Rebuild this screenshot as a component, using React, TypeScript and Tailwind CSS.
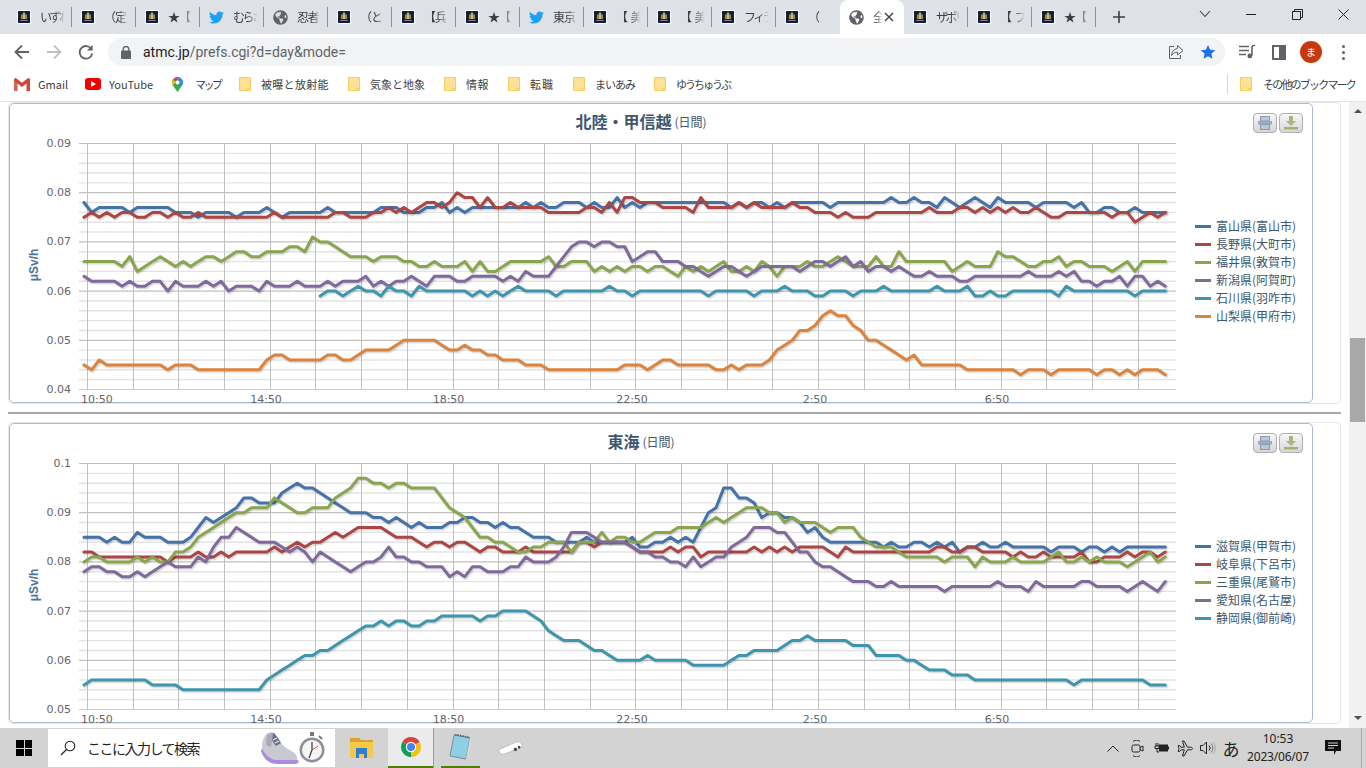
import React from "react";
import { FaTwitter, FaGlobeAmericas } from "react-icons/fa";

const COLORS = ["#4572A7", "#AA4643", "#89A54E", "#80699B", "#3D96AE", "#DB843D"];
const N = null;

const HOKURIKU: (number | null)[][] = [
  [78,76,77,77,77,77,76,77,77,77, 77,77,76,76,76,75,76,76,76,76, 75,76,76,76,77,76,75,76,76,76, 76,76,77,76,76,76,76,76,76,77, 77,77,76,76,76,77,77,78,76,77, 76,77,77,77,77,77,77,77,78,77, 78,77,77,78,78,78,77,78,77,77, 79,77,78,77,78,78,78,78,78,78, 78,78,78,78,78,77,78,77,78,78, 77,78,77,78,78,78,78,78,77,78, 78,78,78,78,78,78,79,78,78,79, 78,78,77,79,78,77,78,79,78,77, 79,78,78,78,78,77,78,78,78,78, 77,78,76,76,77,77,76,76,77,76, 76,76,76],
  [75,76,75,76,75,76,76,75,75,76, 76,75,76,75,75,76,75,75,75,75, 75,75,75,75,75,76,75,75,75,75, 75,75,75,76,76,75,75,75,76,76, 77,76,77,76,77,78,78,77,78,80, 79,79,77,79,77,77,78,77,77,77, 77,76,76,76,76,76,77,77,76,78, 76,79,79,78,78,78,77,77,77,77, 76,79,77,77,77,77,78,77,78,77, 77,77,77,78,77,77,76,76,76,75, 76,75,75,75,76,76,76,76,76,76, 76,77,76,76,76,77,77,76,77,76, 77,76,77,76,76,77,76,75,75,76, 76,76,76,76,76,75,76,76,74,75, 76,75,76],
  [66,66,66,66,66,65,67,64,65,66, 67,66,65,66,65,66,67,67,66,67, 68,68,67,67,68,68,68,69,69,68, 71,70,70,69,68,67,67,67,66,67, 67,67,66,66,65,65,66,65,65,65, 66,64,66,64,64,65,66,66,66,66, 66,67,65,65,66,66,66,64,65,64, 65,64,65,65,64,65,65,64,63,65, 64,65,64,65,66,64,64,65,64,66, 65,63,65,65,65,66,65,65,66,67, 66,65,65,65,67,65,65,68,66,66, 66,66,66,66,64,65,66,65,65,65, 68,67,67,66,65,65,66,66,67,65, 66,66,65,65,65,64,65,66,64,66, 66,66,66],
  [63,62,62,62,62,61,62,61,61,62, 62,60,62,61,61,61,62,61,62,60, 61,61,61,60,62,61,61,61,62,61, 61,61,62,61,62,62,62,63,61,62, 61,62,62,63,62,61,63,63,63,62, 62,63,63,63,63,62,63,62,64,63, 63,63,65,67,69,70,70,69,70,70, 69,69,66,67,68,68,66,66,66,65, 65,64,63,64,65,65,64,63,64,65, 65,65,65,65,64,65,66,66,65,66, 67,65,66,64,65,65,64,65,64,63, 63,64,63,63,63,62,62,63,63,63, 63,63,63,63,64,63,63,63,64,63, 64,62,62,61,62,62,63,61,63,63, 61,62,61],
  [N,N,N,N,N,N,N,N,N,N, N,N,N,N,N,N,N,N,N,N, N,N,N,N,N,N,N,N,N,N, N,59,60,60,59,60,61,60,60,59, 61,60,60,59,61,60,60,60,60,60, 60,59,60,59,60,59,60,61,60,60, 60,60,59,60,60,60,60,60,60,61, 60,60,59,60,60,60,60,60,60,60, 60,60,59,60,60,60,60,60,59,60, 60,60,61,60,60,60,59,59,60,60, 60,59,60,60,60,61,60,60,60,60, 60,60,61,60,60,60,61,59,59,60, 59,59,60,60,60,60,60,60,59,61, 60,60,60,60,60,60,60,60,59,60, 60,60,60],
  [45,44,46,45,45,45,45,45,45,45, 45,44,45,45,45,44,44,44,44,44, 44,44,44,44,46,47,47,46,46,46, 46,46,47,47,46,46,47,48,48,48, 48,49,50,50,50,50,50,49,48,48, 49,48,48,47,47,46,46,46,45,45, 45,44,44,44,44,44,44,44,44,44, 44,45,45,45,44,45,46,46,45,45, 45,45,45,44,44,45,44,45,45,45, 46,48,49,50,52,52,53,55,56,55, 55,53,52,50,50,49,48,47,46,47, 45,45,45,45,45,45,44,44,44,44, 44,44,44,43,44,44,44,43,44,44, 44,44,44,43,44,44,43,44,43,44, 44,44,43],
];

const TOKAI: (number | null)[][] = [
  [85,85,85,84,85,84,84,86,85,85, 85,84,84,84,85,87,89,88,89,90, 91,93,93,92,92,92,94,95,96,95, 95,94,93,92,91,90,90,90,89,89, 88,89,88,87,88,87,87,87,88,88, 89,89,88,88,87,88,87,87,86,85, 85,85,84,84,84,84,85,84,84,84, 84,84,85,83,83,84,84,85,84,85, 84,87,90,91,95,95,93,93,92,89, 90,90,89,89,88,86,87,85,84,84, 84,84,84,84,84,83,84,83,83,84, 84,83,84,83,84,82,83,83,84,83, 83,84,83,83,83,83,83,82,83,83, 83,82,83,83,82,83,82,83,83,83, 83,83,83],
  [82,82,81,81,81,81,81,81,81,81, 81,80,81,81,81,82,81,81,82,81, 82,82,82,82,82,83,82,83,84,83, 84,84,85,86,85,86,87,87,87,87, 86,85,85,85,84,83,84,84,83,84, 84,83,82,83,83,82,82,82,83,82, 82,82,82,82,82,84,84,83,84,84, 84,84,83,82,82,82,82,83,82,83, 83,81,82,82,82,82,82,82,83,82, 83,82,83,82,83,83,83,83,82,81, 83,82,82,82,82,82,82,82,82,82, 82,82,83,83,82,82,83,83,82,82, 82,82,81,82,81,81,82,81,81,81, 81,82,80,80,81,81,81,82,81,82, 82,81,82],
  [80,81,81,80,80,80,80,81,80,81, 80,80,82,82,83,85,86,87,88,89, 90,90,91,91,91,93,92,91,90,90, 91,91,91,93,94,95,97,97,96,96, 95,96,96,95,95,95,95,93,91,90, 89,87,85,85,84,84,83,82,82,83, 83,84,84,84,82,84,84,84,86,84, 85,85,84,84,85,86,86,86,87,87, 87,87,88,89,88,89,90,91,91,91, 90,90,88,89,88,88,88,87,86,87, 87,87,85,84,83,83,83,82,81,81, 81,81,81,80,81,81,81,79,81,80, 80,80,81,80,80,80,80,81,82,80, 80,81,80,81,80,80,80,79,80,81, 82,80,81],
  [78,79,79,78,78,77,77,78,77,78, 79,80,79,79,79,81,80,83,85,85, 87,86,85,84,84,84,83,82,83,82, 80,82,81,80,79,78,79,80,80,81, 83,81,81,80,80,79,79,79,77,78, 77,79,79,78,78,78,79,79,81,80, 80,80,81,83,86,86,86,85,84,84, 84,84,83,82,82,81,81,80,80,79, 81,79,80,81,81,83,84,85,87,87, 87,86,86,84,82,82,80,79,79,78, 77,76,76,76,75,75,76,75,75,75, 75,75,75,74,75,75,75,75,75,75, 76,75,75,75,74,76,75,75,75,75, 75,76,76,75,75,75,75,74,75,76, 75,74,76],
  [55,56,56,56,56,56,56,56,56,55, 55,55,55,54,54,54,54,54,54,54, 54,54,54,54,56,57,58,59,60,61, 61,62,62,63,64,65,66,67,67,68, 67,68,68,67,67,68,68,69,69,69, 69,69,68,69,69,70,70,70,70,69, 68,66,65,64,64,64,63,62,62,61, 60,60,60,60,61,60,60,60,60,60, 59,59,59,59,59,60,61,61,62,62, 62,62,63,64,64,65,64,64,64,64, 64,63,63,63,61,61,61,61,60,60, 59,58,58,58,57,57,57,56,56,56, 56,56,56,56,56,56,56,56,56,56, 55,56,56,56,56,56,56,56,56,56, 55,55,55],
];

const PLOT_TOP = 10.5;
const PLOT_BOTTOM = 256.5;
const PER_UNIT = 246 / 50;
const VLINES = Array.from({ length: 24 }, (_, i) => Math.round(77 + i * 45.69) + 0.5);
const XLABELS: [string, number, "start" | "middle"][] = [
  ["10:50", 71, "start"],
  ["14:50", 256, "middle"],
  ["18:50", 438.5, "middle"],
  ["22:50", 622, "middle"],
  ["2:50", 805, "middle"],
  ["6:50", 987, "middle"],
];

function Plot({ data, min }: { data: (number | null)[][]; min: number }) {
  const yOf = (v: number) => PLOT_BOTTOM - (v - min) * PER_UNIT;
  const paths = data.map((s) =>
    s
      .map((v, i) => (v === null ? "" : `${(74 + 7.615 * i).toFixed(1)},${yOf(v).toFixed(1)}`))
      .filter(Boolean)
      .join(" ")
  );
  const minors = Array.from({ length: 26 }, (_, i) => i);
  const top = min + 50;
  return (
    <svg width="1170" height="270" viewBox="0 0 1170 270" className="shrink-0 overflow-visible [font-family:'DejaVu_Sans',sans-serif]">
      {minors.map((i) => (
        <line
          key={i}
          x1="69"
          x2="1166"
          y1={PLOT_TOP + i * 9.84}
          y2={PLOT_TOP + i * 9.84}
          stroke={i === 25 ? "#C0D0E0" : i % 5 === 0 ? "#c0c0c0" : "#e3e3e3"}
          strokeWidth={i % 5 === 0 ? 1.2 : 1.4}
        />
      ))}
      {VLINES.map((x) => (
        <line key={x} x1={x} x2={x} y1={PLOT_TOP} y2={PLOT_BOTTOM} stroke="#c0c0c0" strokeWidth="1" />
      ))}
      {[0, 1, 2, 3, 4, 5].map((i) => (
        <text key={i} x="61" y={PLOT_TOP + i * 49.2 + 3.5} textAnchor="end" className="fill-[#666666] text-[11px]">
          {((top - i * 10) / 1000).toString()}
        </text>
      ))}
      {XLABELS.map(([t, x, a]) => (
        <text key={t} x={x} y="269.5" textAnchor={a} className="fill-[#666666] text-[11px]">
          {t}
        </text>
      ))}
      <text
        x="24"
        y="132"
        textAnchor="middle"
        dominantBaseline="central"
        transform="rotate(-90 24 132)"
        className="fill-[#4D759E] text-[12px] font-bold [font-family:'Liberation_Sans',sans-serif]"
      >
        μSv/h
      </text>
      {paths.map((p, i) => (
        <g key={i} fill="none" strokeLinejoin="round" strokeLinecap="round">
          <polyline points={p} stroke="#000" strokeOpacity="0.05" strokeWidth="5.5" transform="translate(1 1)" />
          <polyline points={p} stroke="#000" strokeOpacity="0.1" strokeWidth="3.5" transform="translate(1 1)" />
          <polyline points={p} stroke={COLORS[i]} strokeWidth="3" />
        </g>
      ))}
    </svg>
  );
}

function PrintIcon() {
  return (
    <svg width="16" height="14" viewBox="0 0 16 14">
      <rect x="3.5" y="0.5" width="9" height="4.5" fill="#b4c8e2" stroke="#8b9aae" />
      <rect x="1" y="5" width="14" height="3.5" fill="#9fa9b6" />
      <rect x="3.5" y="8.5" width="9" height="5" fill="#b4c8e2" stroke="#8b9aae" />
    </svg>
  );
}

function DownloadIcon() {
  return (
    <svg width="16" height="14" viewBox="0 0 16 14">
      <path d="M6 0h4v5h3l-5 5-5-5h3z" fill="#a8b878" />
      <rect x="1" y="11" width="14" height="2.5" fill="#a4b26d" />
    </svg>
  );
}

function Chart({ title, names, data, min }: { title: string; names: string[]; data: (number | null)[][]; min: number }) {
  return (
    <div className="h-[302px] w-[1333px] shrink-0 rounded-[4px] border border-[#e6e6e6] bg-white">
      <div className="relative flex h-[300px] w-[1304px] flex-col rounded-[5px] border border-[#a7bbd5] bg-white">
        <div className="flex h-[29px] shrink-0 items-center justify-center pr-[40px] pt-[5px] text-[#3E576F]">
          <span className="text-[16px] font-bold leading-none">{title}</span>
          <span className="ml-[3px] mt-[2px] text-[12px] leading-none">(日間)</span>
        </div>
        <div className="absolute right-[9px] top-[9px] flex gap-[2px]">
          <div className="flex h-[20px] w-[24px] items-center justify-center rounded-[4px] border border-[#b0b0b0] bg-gradient-to-b from-[#f8f8f8] to-[#d6d6d6]">
            <PrintIcon />
          </div>
          <div className="flex h-[20px] w-[24px] items-center justify-center rounded-[4px] border border-[#b0b0b0] bg-gradient-to-b from-[#f8f8f8] to-[#d6d6d6]">
            <DownloadIcon />
          </div>
        </div>
        <div className="flex">
          <Plot data={data} min={min} />
          <div className="ml-[15px] pt-[84px]">
            {names.map((n, i) => (
              <div key={n} className="flex h-[18px] items-center">
                <div className="h-[3px] w-[16px]" style={{ background: COLORS[i] }} />
                <span className="ml-[5px] whitespace-nowrap text-[12px] leading-none text-[#3E576F]">{n}</span>
              </div>
            ))}
          </div>
        </div>
      </div>
    </div>
  );
}

function Favicon() {
  return (
    <svg width="14" height="14" viewBox="0 0 14 14" className="shrink-0">
      <rect width="14" height="14" fill="#fff" />
      <rect x="1" y="1" width="12" height="12" fill="#181d3e" />
      <rect x="6" y="2.5" width="2" height="6.5" fill="#b9995a" />
      <rect x="4" y="4.5" width="6" height="4.5" fill="#9c8757" />
      <rect x="6" y="3" width="2" height="6" fill="#d4b468" />
      <rect x="3.5" y="10" width="7" height="1" fill="#7f8194" />
    </svg>
  );
}

const TABS: [string, string, string][] = [
  ["fav", "いずれ", "tracking-[-2.5px]"],
  ["fav", "（定", "tracking-[-1px]"],
  ["fav", "★【", "tracking-[-1px]"],
  ["tw", "むらさ", "tracking-[-2.5px]"],
  ["globe", "忍者", "tracking-[-1.5px]"],
  ["fav", "（と", "tracking-[-1px]"],
  ["fav", "【兵", "tracking-[-1px]"],
  ["fav", "★【", "tracking-[-1px]"],
  ["tw", "東京", "tracking-[-1px]"],
  ["fav", "【 美", "tracking-[0px]"],
  ["fav", "【 美", "tracking-[0px]"],
  ["fav", "フィラ", "tracking-[-2.5px]"],
  ["fav", "（", "tracking-[0px]"],
  ["active", "全", "tracking-[0px]"],
  ["fav", "ザポリ", "tracking-[-2.5px]"],
  ["fav", "【 プ", "tracking-[0px]"],
  ["fav", "★【", "tracking-[-1px]"],
];

function TabIcon({ kind }: { kind: string }) {
  if (kind === "tw") return <FaTwitter className="h-[15px] w-[15px] shrink-0 text-[#1da1f2]" />;
  if (kind === "globe" || kind === "active") return <FaGlobeAmericas className="h-[15px] w-[15px] shrink-0 text-[#5f6368]" />;
  return <Favicon />;
}

function TabStrip() {
  return (
    <div className="flex h-[34px] shrink-0 bg-[#dee1e6] pl-[8px]">
      {TABS.map(([k, t, tr], i) => {
        const active = k === "active";
        const noSep = active || TABS[i + 1]?.[0] === "active";
        return (
          <div key={i} className={`flex h-[34px] w-[64px] shrink-0 items-center pl-[9px] ${active ? "rounded-t-[8px] bg-white" : ""}`}>
            <TabIcon kind={k} />
            {active ? (
              <>
                <span className="ml-[9px] w-[10px] overflow-hidden whitespace-nowrap text-[12px] text-[#3c4043] [mask-image:linear-gradient(to_right,black_30%,transparent)]">{t}</span>
                <svg width="10" height="10" viewBox="0 0 10 10" className="ml-[1px]">
                  <path d="M1 1l8 8M9 1l-8 8" stroke="#3c4043" strokeWidth="1.4" />
                </svg>
              </>
            ) : (
              <span className={`ml-[9px] w-[25px] overflow-hidden whitespace-nowrap text-[12px] text-[#3c4043] [mask-image:linear-gradient(to_right,black_60%,transparent)] ${tr}`}>{t}</span>
            )}
            {!noSep && <div className="ml-auto h-[20px] w-px shrink-0 bg-[#8f9296]" />}
          </div>
        );
      })}
      <div className="ml-[9px] flex h-[34px] w-[28px] items-center justify-center">
        <svg width="14" height="14" viewBox="0 0 14 14">
          <path d="M7 1v12M1 7h12" stroke="#3c4043" strokeWidth="1.6" />
        </svg>
      </div>
      <div className="ml-auto flex pb-[6px]">
        <div className="mr-[12px] flex h-[28px] w-[22px] items-center justify-center">
          <svg width="12" height="8" viewBox="0 0 12 8">
            <path d="M1 1l5 5.5L11 1" fill="none" stroke="#3c4043" strokeWidth="1.1" />
          </svg>
        </div>
        <div className="flex h-[28px] w-[46px] items-center justify-center">
          <div className="h-px w-[10px] bg-[#222]" />
        </div>
        <div className="flex h-[28px] w-[46px] items-center justify-center">
          <svg width="11" height="11" viewBox="0 0 11 11">
            <path d="M.5 2.5h8v8h-8zM2.5 2.5v-2h8v8h-2" fill="none" stroke="#222" />
          </svg>
        </div>
        <div className="flex h-[28px] w-[46px] items-center justify-center">
          <svg width="11" height="11" viewBox="0 0 11 11">
            <path d="M.5.5l10 10M10.5.5l-10 10" stroke="#222" />
          </svg>
        </div>
      </div>
    </div>
  );
}

function Toolbar() {
  return (
    <div className="flex h-[36px] shrink-0 items-center bg-white pl-[6px]">
      <div className="flex h-[32px] w-[32px] items-center justify-center">
        <svg width="16" height="16" viewBox="0 0 16 16">
          <path d="M15 8H2M8 1.5L1.5 8 8 14.5" fill="none" stroke="#5f6368" strokeWidth="1.8" />
        </svg>
      </div>
      <div className="flex h-[32px] w-[32px] items-center justify-center">
        <svg width="16" height="16" viewBox="0 0 16 16">
          <path d="M1 8h13M8 1.5L14.5 8 8 14.5" fill="none" stroke="#bdc1c6" strokeWidth="1.8" />
        </svg>
      </div>
      <div className="flex h-[32px] w-[32px] items-center justify-center">
        <svg width="16" height="16" viewBox="0 0 16 16">
          <path d="M13.5 5.2A6.3 6.3 0 1 0 14.2 9.5" fill="none" stroke="#5f6368" strokeWidth="1.8" />
          <path d="M14.6 1v5.6H9z" fill="#5f6368" />
        </svg>
      </div>
      <div className="ml-[6px] flex h-[28px] w-[1117px] items-center rounded-full bg-[#f1f3f4] pl-[13px]">
        <svg width="10" height="13" viewBox="0 0 10 13" className="shrink-0">
          <path d="M2.2 5V3.4a2.8 2.8 0 0 1 5.6 0V5" fill="none" stroke="#5f6368" strokeWidth="1.3" />
          <rect y="4.6" width="10" height="8.4" rx="1.2" fill="#5f6368" />
        </svg>
        <span className="ml-[12px] whitespace-nowrap text-[14px] leading-none [font-family:'Roboto',sans-serif]">
          <span className="text-[#202124]">atmc.jp</span>
          <span className="text-[#5f6368]">/prefs.cgi?d=day&amp;mode=</span>
        </span>
        <svg width="16" height="16" viewBox="0 0 16 16" className="ml-auto">
          <path d="M9.5 1.5L15 6.5l-5.5 4.5V8.3C6 8.3 4.6 9.6 3.6 11.5 3.8 7.6 6 4.9 9.5 4.6z" fill="none" stroke="#5f6368" />
          <path d="M6 2.5H1.5v12h11V11" fill="none" stroke="#5f6368" />
        </svg>
        <svg width="16" height="16" viewBox="0 0 24 24" className="ml-[16px] mr-[9px]">
          <path d="M12 1.5l3.2 7.1 7.7.8-5.8 5.1 1.7 7.6L12 18.2l-6.8 3.9 1.7-7.6L1.1 9.4l7.7-.8z" fill="#1a73e8" />
        </svg>
      </div>
      <div className="ml-[6px] flex h-[32px] w-[32px] items-center justify-center">
        <svg width="16" height="14" viewBox="0 0 16 14">
          <path d="M0 1.5h10M0 5.5h10M0 9.5h7" stroke="#5f6368" strokeWidth="1.6" />
          <path d="M13 1v9.5" stroke="#5f6368" strokeWidth="1.6" />
          <path d="M13 0.5h3" stroke="#5f6368" strokeWidth="1.6" />
          <circle cx="10.8" cy="11" r="2.4" fill="#5f6368" />
        </svg>
      </div>
      <div className="flex h-[32px] w-[32px] items-center justify-center">
        <div className="flex h-[15px] w-[14px] justify-end border-2 border-[#5f6368]">
          <div className="h-full w-[5px] bg-[#5f6368]" />
        </div>
      </div>
      <div className="flex h-[32px] w-[32px] items-center justify-center">
        <div className="flex h-[22px] w-[22px] items-center justify-center rounded-full bg-[#c5390c] text-[10px] leading-none text-white">ま</div>
      </div>
      <div className="flex h-[32px] w-[32px] flex-col items-center justify-center gap-[3px]">
        <div className="h-[3px] w-[3px] rounded-full bg-[#5f6368]" />
        <div className="h-[3px] w-[3px] rounded-full bg-[#5f6368]" />
        <div className="h-[3px] w-[3px] rounded-full bg-[#5f6368]" />
      </div>
    </div>
  );
}

function Folder() {
  return (
    <svg width="12" height="14" viewBox="0 0 12 14" className="shrink-0">
      <path d="M.5.5h11v13H.5z" fill="#fde293" stroke="#f6ce60" />
      <path d="M8.5 13.5v-2h3" fill="none" stroke="#f6ce60" />
    </svg>
  );
}

const FOLDERS: [string, number, string][] = [
  ["被曝と放射能", 68, "tracking-[0.3px]"],
  ["気象と地象", 55, "tracking-[0px]"],
  ["情報", 23, "tracking-[0.5px]"],
  ["転職", 24, "tracking-[1px]"],
  ["まいあみ", 40, "tracking-[-1px]"],
  ["ゆうちゅうぶ", 54, "tracking-[-2px]"],
];

function Bookmarks() {
  return (
    <div className="flex h-[32px] shrink-0 items-center border-b border-[#e3e3e3] bg-white pb-[3px] pl-[14px] text-[11px] leading-none text-[#3c4043]">
      <svg width="16" height="13" viewBox="0 0 16 13" className="shrink-0">
        <path d="M0 1.5V13h3.5V5.5L8 9l4.5-3.5V13H16V1.5a1.5 1.5 0 0 0-2.5-1L8 4.7 2.5.5A1.5 1.5 0 0 0 0 1.5z" fill="#d44638" />
        <path d="M0 1.5V13h3.5V5L0 2.2z" fill="#c5c5c5" opacity="0.25" />
      </svg>
      <span className="ml-[8px] w-[30px] whitespace-nowrap">Gmail</span>
      <div className="ml-[17px] flex h-[12px] w-[16px] shrink-0 items-center justify-center rounded-[3px] bg-[#f40000]">
        <div className="ml-[1px] h-0 w-0 border-y-[3px] border-l-[5px] border-y-transparent border-l-white" />
      </div>
      <span className="ml-[8px] w-[44px] whitespace-nowrap">YouTube</span>
      <svg width="11" height="15" viewBox="0 0 11 15" className="ml-[19px] shrink-0">
        <path d="M5.5 0A5.5 5.5 0 0 0 .9 8.4L5.5 15l4.6-6.6A5.5 5.5 0 0 0 5.5 0z" fill="#34a853" />
        <path d="M5.5 0A5.5 5.5 0 0 1 10.1 8.4L7.5 5.5A2.2 2.2 0 0 0 5.5 3.3z" fill="#4285f4" />
        <path d="M1 2.8A5.5 5.5 0 0 1 5.5 0v3.3a2.2 2.2 0 0 0-1.8 1z" fill="#ea4335" />
        <path d="M.9 8.4A5.5 5.5 0 0 1 1 2.8l2.7 2.2z" fill="#fbbc04" />
        <circle cx="5.5" cy="5.5" r="2" fill="#fff" />
      </svg>
      <span className="ml-[12px] w-[25px] whitespace-nowrap tracking-[-2.6px]">マップ</span>
      <div className="ml-[19px] flex">
        {FOLDERS.map(([t, w, tr], i) => (
          <div key={t} className={`flex items-center ${i ? "ml-[19px]" : ""}`}>
            <Folder />
            <span className={`ml-[10px] whitespace-nowrap ${tr}`} style={{ width: w }}>
              {t}
            </span>
          </div>
        ))}
      </div>
      <div className="ml-auto flex items-center pr-[11px]">
        <div className="mr-[12px] h-[20px] w-px bg-[#d5d5d5]" />
        <Folder />
        <span className="ml-[11px] w-[92px] whitespace-nowrap tracking-[-1.8px]">その他のブックマーク</span>
      </div>
    </div>
  );
}

function Scrollbar() {
  return (
    <div className="flex h-full w-[17px] flex-col items-center bg-[#f1f1f1]">
      <div className="mt-[7px] h-0 w-0 border-x-[4px] border-b-[4px] border-x-transparent border-b-[#505050]" />
      <div className="mt-[225px] h-[84px] w-[15px] bg-[#a8a8a8]" />
      <div className="mt-auto mb-[8px] h-0 w-0 border-x-[4px] border-t-[4px] border-x-transparent border-t-[#505050]" />
    </div>
  );
}

function WinLogo() {
  return (
    <div className="grid h-[16px] w-[16px] shrink-0 grid-cols-2 gap-[1px]">
      <div className="bg-black" />
      <div className="bg-black" />
      <div className="bg-black" />
      <div className="bg-black" />
    </div>
  );
}

function Shoe() {
  return (
    <svg width="38" height="34" viewBox="0 0 38 34" className="shrink-0">
      <path d="M1 16C1 10 3 5 6 3c2-2 5-2 7-1l3 4 5 7c3 4 8 6 11 8 3 2 5 5 4 8H14C7 27 2 22 1 16z" fill="#c9c9d2" />
      <path d="M13 2l4 5 3 5-5 3c-3-3-5-8-6-12z" fill="#6f7088" />
      <path d="M16 7l-4 2M18 10l-4 2" stroke="#e8e8f0" strokeWidth="1.2" />
      <path d="M6 3L5 14l5 2 2-13z" fill="#a9a9b8" />
      <path d="M1 17c3 7 8 11 14 12h21c1.500 0 2 1 1.500 2-.5 1.500-2 2-4 2H16C8 33 2 27 0 20z" fill="#a98be0" />
    </svg>
  );
}

function Stopwatch() {
  return (
    <svg width="26" height="32" viewBox="0 0 26 32" className="shrink-0">
      <rect x="11" y="0" width="4" height="4" fill="#777" />
      <path d="M20 4l3 3" stroke="#777" strokeWidth="2" />
      <circle cx="13" cy="18" r="12.5" fill="#8f8f9c" />
      <circle cx="13" cy="18" r="10" fill="#f5f5f5" />
      <path d="M13 18V10M13 18l-3 8" stroke="#444" strokeWidth="1.3" />
      <path d="M13 18l6-4" stroke="#c33" strokeWidth="0.8" />
    </svg>
  );
}

function ChromeLogo() {
  return (
    <svg width="24" height="24" viewBox="0 0 24 24">
      <path d="M12 12L3.34 7A10 10 0 0 1 20.66 7z" fill="#db4437" />
      <path d="M12 12L20.66 7A10 10 0 0 1 12 22z" fill="#f4c20d" />
      <path d="M12 12L12 22A10 10 0 0 1 3.34 7z" fill="#0f9d58" />
      <circle cx="12" cy="12" r="5.2" fill="#fff" />
      <circle cx="12" cy="12" r="4" fill="#4285f4" />
    </svg>
  );
}

function Taskbar() {
  return (
    <div className="flex h-[40px] shrink-0 items-center bg-[#d3d3d3] pl-[16px] text-[#222]">
      <WinLogo />
      <div className="ml-[16px] flex h-[38px] w-[287px] shrink-0 items-center bg-white pl-[12px]">
        <svg width="16" height="16" viewBox="0 0 16 16" className="shrink-0">
          <circle cx="10" cy="6" r="4.8" fill="none" stroke="#222" strokeWidth="1.1" />
          <path d="M6.5 9.5L1 15" stroke="#222" strokeWidth="1.2" />
        </svg>
        <span className="ml-[11px] w-[112px] whitespace-nowrap text-[14px] leading-none tracking-[-1.5px]">ここに入力して検索</span>
        <div className="ml-[62px] flex items-center">
          <Shoe />
          <Stopwatch />
        </div>
      </div>
      <div className="flex h-[40px] w-[53px] shrink-0 items-center justify-center">
        <svg width="23" height="20" viewBox="0 0 23 20">
          <path d="M0 0h9l2 2h12v4H0z" fill="#e0a030" />
          <rect y="4" width="23" height="16" fill="#f8c948" />
          <path d="M6 10h11v10h-3v-4H9v4H6z" fill="#2b7fd4" />
        </svg>
      </div>
      <div className="flex h-[40px] w-[46px] shrink-0 flex-col items-center border-r border-[#9a9a9a] bg-[#ebebeb]">
        <div className="flex flex-1 items-center">
          <ChromeLogo />
        </div>
        <div className="h-[2px] w-full bg-[#4f7f00]" />
      </div>
      <div className="ml-[7px] flex h-[40px] w-[39px] shrink-0 flex-col items-center">
        <div className="flex flex-1 items-center">
          <svg width="24" height="26" viewBox="0 0 24 26">
            <path d="M5 1l16 3-4 21-16-3z" fill="#8dd0e6" stroke="#7a8a92" />
            <path d="M6 0.5l15 3" stroke="#555" strokeWidth="1.5" strokeDasharray="1.5 1" />
            <path d="M17 25l4-21 2 1-4 20z" fill="#d8d8d8" />
          </svg>
        </div>
        <div className="h-[2px] w-full bg-[#4f7f00]" />
      </div>
      <div className="ml-[18px] flex h-[40px] items-center">
        <svg width="25" height="14" viewBox="0 0 25 14">
          <path d="M2 8L18 1c3-1 7 1 6 4-1 1-3 2-5 3L7 13C2 14-1 10 2 8z" fill="#fff" stroke="#a8a8a8" strokeWidth="0.7" />
          <rect x="16" y="7" width="2.500" height="3" fill="#333" transform="rotate(-20 17 8)" />
          <rect x="20" y="5" width="2" height="2.500" fill="#333" transform="rotate(-20 21 6)" />
        </svg>
      </div>
      <div className="ml-auto flex h-[40px] items-center pr-[4px]">
        <div className="flex w-[24px] justify-center">
          <svg width="12" height="7" viewBox="0 0 12 7">
            <path d="M.5 6.5L6 1l5.500 5.500" fill="none" stroke="#222" />
          </svg>
        </div>
        <div className="flex w-[24px] justify-center">
          <svg width="13" height="17" viewBox="0 0 13 17" fill="none" stroke="#222">
            <path d="M2 1.5a5 5 0 0 1 7 0M2 15.5a5 5 0 0 0 7 0" />
            <rect x="1" y="5" width="8" height="7" rx="1.5" />
            <path d="M9 7.5l3-1.5v5l-3-1.5" />
          </svg>
        </div>
        <div className="flex w-[24px] justify-center">
          <svg width="16" height="12" viewBox="0 0 16 12">
            <path d="M3 1v3M5 1v3M2 4h4v2.5H2zM4 6.5V10h2" fill="none" stroke="#222" />
            <rect x="6" y="2.500" width="9" height="7" fill="#222" />
            <rect x="15" y="4.500" width="1" height="3" fill="#222" />
          </svg>
        </div>
        <div className="flex w-[24px] justify-center">
          <svg width="17" height="17" viewBox="0 0 17 17">
            <path d="M15.500 8.500c0-.8-.8-1.300-1.800-1.300H10.500L7 1H5.500l1.800 6.200H4L2.600 5.500H1.200L2 8.500l-.8 3h1.400L4 9.800h3.300L5.500 16H7l3.500-6.200h3.200c1 0 1.800-.5 1.800-1.300z" fill="none" stroke="#222" />
          </svg>
        </div>
        <div className="flex w-[22px] justify-center">
          <svg width="16" height="14" viewBox="0 0 16 14" fill="none">
            <path d="M.5 4.500h2.500l3.500-3.500v12L3 9.500H.5z" stroke="#222" />
            <path d="M9 4.500a3.500 3.500 0 0 1 0 5" stroke="#222" />
            <path d="M11 2.500a6.500 6.500 0 0 1 0 9" stroke="#777" />
            <path d="M13 1a9 9 0 0 1 0 12" stroke="#aaa" />
          </svg>
        </div>
        <div className="w-[24px] text-center text-[17px] leading-none">あ</div>
        <div className="flex w-[70px] flex-col items-center text-[12px] leading-[18px] [font-family:'Noto_Sans',sans-serif]">
          <span>10:53</span>
          <span className="tracking-[-0.2px]">2023/06/07</span>
        </div>
        <div className="flex w-[40px] justify-center">
          <svg width="17" height="16" viewBox="0 0 17 16">
            <path d="M0 0h16v11h-5l-2 4v-4H0z" fill="#111" />
            <path d="M3 3h10M3 5.500h10M3 8h6" stroke="#d3d3d3" />
          </svg>
        </div>
        <div className="ml-[8px] h-[40px] w-px bg-[#a8a8a8]" />
      </div>
    </div>
  );
}

export default function App() {
  return (
    <div className="flex h-[768px] w-[1366px] flex-col overflow-hidden bg-white [font-family:'Noto_Sans_CJK_JP','Noto_Sans',sans-serif]">
      <TabStrip />
      <Toolbar />
      <Bookmarks />
      <div className="flex min-h-0 flex-1">
        <div className="flex w-[1349px] shrink-0 flex-col overflow-hidden pl-[8px]">
          <Chart
            title="北陸・甲信越"
            names={["富山県(富山市)", "長野県(大町市)", "福井県(敦賀市)", "新潟県(阿賀町)", "石川県(羽咋市)", "山梨県(甲府市)"]}
            data={HOKURIKU}
            min={40}
          />
          <div className="mt-[8px] h-[2px] w-[1333px] shrink-0 bg-[#a8a8a8]" />
          <div className="mt-[8px]">
            <Chart
              title="東海"
              names={["滋賀県(甲賀市)", "岐阜県(下呂市)", "三重県(尾鷲市)", "愛知県(名古屋)", "静岡県(御前崎)"]}
              data={TOKAI}
              min={50}
            />
          </div>
        </div>
        <Scrollbar />
      </div>
      <Taskbar />
    </div>
  );
}
